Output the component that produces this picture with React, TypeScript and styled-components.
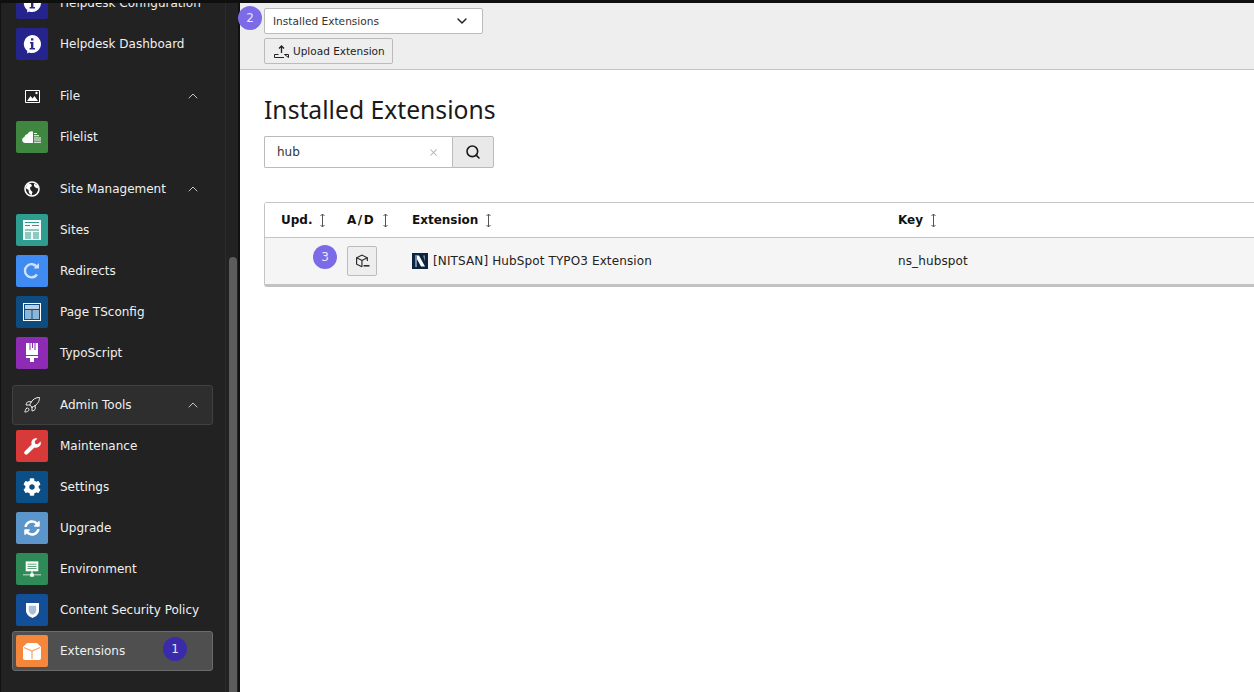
import React from 'react';
import styled, { createGlobalStyle } from 'styled-components';
import { ChevronDown, ChevronUp, Rocket, Search, X } from 'lucide-react';
import { FaCog, FaSyncAlt } from 'react-icons/fa';

const GlobalStyle = createGlobalStyle`
  html, body {
    margin: 0;
    height: 100%;
    overflow: hidden;
    background: #fff;
  }
  body {
    font-family: "DejaVu Sans", sans-serif;
    color: #1a1a1a;
  }
`;

const Page = styled.div`
  display: flex;
  flex-direction: column;
  width: 1254px;
  height: 692px;
  overflow: hidden;
`;

const TopStrip = styled.div`
  flex: none;
  height: 3px;
  background: #0f0f0f;
  position: relative;
  z-index: 2;
`;

const Body = styled.div`
  flex: 1;
  display: flex;
  min-height: 0;
`;

const Sider = styled.aside`
  flex: none;
  width: 240px;
  position: relative;
  overflow: hidden;
  background: #222222;
  border-left: 1px solid #111;
  border-right: 2px solid #111;
  box-sizing: border-box;
`;

const Scrollbar = styled.div`
  position: absolute;
  top: 254px;
  bottom: 0;
  right: 1px;
  width: 8px;
  border-radius: 4px 4px 0 0;
  background: #5c5c5c;
`;

const Track = styled.div`
  position: absolute;
  top: 0;
  bottom: 0;
  right: 12px;
  width: 1px;
  background: #2b2b2b;
`;

const Nav = styled.nav`
  display: flex;
  flex-direction: column;
  gap: 12px;
  margin-top: -20px;
  padding: 0 25px 0 11px;
`;

const Group = styled.div`
  display: flex;
  flex-direction: column;
  gap: 1px;
`;

const Row = styled.div<{ $active?: boolean; $boxed?: boolean }>`
  display: flex;
  align-items: center;
  position: relative;
  height: 40px;
  padding: 0 3px;
  box-sizing: border-box;
  border: 1px solid transparent;
  border-radius: 3px;
  color: #f0f0f0;
  font-size: 12px;
  ${(p) => p.$boxed && 'background: #2e2e2e; border-color: #414141;'}
  ${(p) => p.$active && 'background: #4f4f4f; border-color: #6c6c6c;'}
`;

const IconBox = styled.span<{ $bg: string }>`
  flex: none;
  display: flex;
  align-items: center;
  justify-content: center;
  width: 32px;
  height: 32px;
  border-radius: 2px;
  background: ${(p) => p.$bg};
  color: #fff;
`;

const PlainIcon = styled.span`
  flex: none;
  display: flex;
  align-items: center;
  justify-content: center;
  width: 32px;
  height: 32px;
  color: #f4f4f4;
`;

const Label = styled.span`
  margin-left: 12px;
  white-space: nowrap;
`;

const Caret = styled.span`
  margin-left: auto;
  margin-right: 8px;
  display: flex;
  color: #c4c4c4;
`;

const Badge = styled.span<{ $dark?: boolean; $x: number; $y: number }>`
  position: absolute;
  left: ${(p) => p.$x}px;
  top: ${(p) => p.$y}px;
  width: 24px;
  height: 24px;
  border-radius: 50%;
  display: flex;
  align-items: center;
  justify-content: center;
  font-size: 12px;
  color: #e8e6fb;
  background: ${(p) => (p.$dark ? '#3a2bab' : '#7b6be6')};
  z-index: 3;
`;

const Main = styled.main`
  flex: 1;
  min-width: 0;
  display: flex;
  flex-direction: column;
  position: relative;
`;

const Toolbar = styled.div`
  flex: none;
  display: flex;
  flex-direction: column;
  align-items: flex-start;
  gap: 4px;
  height: 67px;
  box-sizing: border-box;
  padding: 5px 24px 0;
  background: #eeeeee;
  border-bottom: 1px solid #c4c4c4;
`;

const Select = styled.div`
  width: 219px;
  height: 26px;
  box-sizing: border-box;
  display: flex;
  align-items: center;
  justify-content: space-between;
  padding: 0 12px 0 8px;
  background: #fff;
  border: 1px solid #bbbbbb;
  border-radius: 2px;
  font-size: 10.6px;
  color: #333;
`;

const Button = styled.button`
  display: inline-flex;
  align-items: center;
  gap: 4px;
  height: 26px;
  width: 129px;
  box-sizing: border-box;
  padding: 0 0 0 9px;
  font-family: inherit;
  font-size: 10.5px;
  white-space: nowrap;
  color: #222;
  background: #eeeeee;
  border: 1px solid #bbbbbb;
  border-radius: 2px;
`;

const Content = styled.div`
  flex: 1;
  padding: 24px 0 0 24px;
`;

const Title = styled.h1`
  margin: 0;
  font-family: "Noto Sans", sans-serif;
  font-weight: 400;
  font-size: 24.7px;
  line-height: 32px;
  color: #1a1a1a;
`;

const SearchBar = styled.div`
  display: flex;
  width: 230px;
  height: 32px;
  margin-top: 10px;
  box-sizing: border-box;
`;

const SearchInput = styled.div`
  flex: 1;
  display: flex;
  align-items: center;
  justify-content: space-between;
  padding: 0 13px 0 12px;
  border: 1px solid #bbbbbb;
  border-right: 0;
  border-radius: 2px 0 0 2px;
  background: #fff;
  font-size: 12px;
  color: #333;
`;

const SearchButton = styled.div`
  flex: none;
  width: 42px;
  box-sizing: border-box;
  display: flex;
  align-items: center;
  justify-content: center;
  background: #e9e9e9;
  border: 1px solid #bbbbbb;
  border-radius: 0 2px 2px 0;
  color: #1a1a1a;
`;

const Table = styled.div`
  margin: 34px -12px 0 0;
  border: 1px solid #c4c4c4;
  border-bottom: 3px solid #c2c2c2;
  border-radius: 3px;
`;

const Line = styled.div<{ $head?: boolean }>`
  display: grid;
  grid-template-columns: 66px 65px 486px 1fr;
  align-items: center;
  padding-left: 16px;
  box-sizing: border-box;
  font-size: 12px;
  ${(p) =>
    p.$head
      ? 'height: 35px; background: #fff; font-weight: 700; border-bottom: 1px solid #c4c4c4;'
      : 'height: 46px; background: #f5f5f5;'}
`;

const HeadCell = styled.div<{ $wide?: boolean }>`
  display: flex;
  align-items: center;
  gap: 7px;
  color: #111;
  ${(p) => p.$wide && 'letter-spacing: 1.5px;'}
`;

const ExtensionCell = styled.div`
  display: flex;
  align-items: center;
  gap: 5px;
  padding-bottom: 1px;
  letter-spacing: 0.12px;
  color: #222;
`;

const ActionButton = styled.div`
  width: 30px;
  height: 30px;
  box-sizing: border-box;
  display: flex;
  align-items: center;
  justify-content: center;
  background: #eeeeee;
  border: 1px solid #bcbcbc;
  border-radius: 2px;
`;

const SortIcon = () => (
  <svg width="7" height="15" viewBox="0 0 7 15" fill="none" stroke="#555" strokeWidth="1">
    <path d="M3.5 1v13M1.5 3l2-2 2 2M1.5 12l2 2 2-2" />
  </svg>
);

const icons: Record<string, React.ReactNode> = {
  info: (
    <svg width="20" height="20" viewBox="0 0 20 20">
      <path d="M10 1a9 9 0 1 1-3 17.500L5 19.500l.3-2.500A9 9 0 0 1 10 1z" fill="#fff" />
      <path d="M8 8h3.400v6H13v1.600H7.600V14H9V9.600H8zM9 4.200h2.400v2.400H9z" fill="#2a2a8c" />
    </svg>
  ),
  cloud: (
    <svg width="20" height="12" viewBox="0 0 20 12" fill="#fff">
      <path d="M3 12a3 3 0 0 1-.6-5.900A4 4 0 0 1 5.500 3 4.600 4.600 0 0 1 11 .4V12z" />
      <path d="M12 2h3v1h-3zM12 4.200h5v1h-5zM12 6.400h7v1h-7zM12 8.600h7v1h-7zM12 10.800h7v1h-7z" />
    </svg>
  ),
  sites: (
    <svg width="18" height="20" viewBox="0 0 18 20">
      <path d="M0 0h18v20H0z" fill="#fff" opacity=".95" />
      <path d="M2 2h14v1H2zM2 5h5v1H2zM9 5h7v1H9z" fill="#2e9c8e" />
      <path d="M2 9h14v2H2zM2 12h6v7H2zM10 12h6v7h-6z" fill="#8fcac2" />
    </svg>
  ),
  redirect: (
    <svg width="18" height="18" viewBox="0 0 18 18" fill="none">
      <path d="M14 12.500A6.600 6.600 0 1 1 14 5" stroke="#cfe1fb" strokeWidth="2.400" />
      <path d="M10.500 6.500H16V1z" fill="#cfe1fb" />
    </svg>
  ),
  tsconfig: (
    <svg width="18" height="18" viewBox="0 0 18 18">
      <path d="M0 0h18v18H0z" fill="#fff" />
      <path d="M1 1h16v16H1z" fill="#0e4c80" />
      <path d="M2 2h14v4H2z" fill="#b9d0e4" />
      <path d="M2 7h6.500v9H2zM9.500 7H16v9H9.500z" fill="#8db5d6" />
    </svg>
  ),
  brush: (
    <svg width="14" height="20" viewBox="0 0 14 20" fill="#fff">
      <path d="M1 0h12v12H1z" />
      <path d="M4.500 0h1v7h-1zM7 0h1v5H7zM9.500 0h1v7h-1z" fill="#8e2bb5" />
      <path d="M1 13h12v2H9v4H5v-4H1z" />
    </svg>
  ),
  wrench: (
    <svg width="17" height="17" viewBox="0 0 18 18" fill="#fff">
      <path d="M17.500 3.600l-3 3-2.600-.6-.6-2.600 3-3a5 5 0 0 0-6.200 6.400L.9 14a2 2 0 0 0 3 3l7.200-7a5 5 0 0 0 6.400-6.400z" />
    </svg>
  ),
  environment: (
    <svg width="18" height="17" viewBox="0 0 20 18" fill="#fff">
      <path d="M3 0h14v11H3z" />
      <path d="M5 2.500h10v1H5zM5 5h10v1H5zM5 7.500h10v1H5z" fill="#2e8b57" />
      <path d="M9.300 11h1.400v3h-1.400zM0 14.500h20v1H0zM8 13.500h4V17H8z" />
    </svg>
  ),
  shield: (
    <svg width="13" height="15" viewBox="0 0 14 16">
      <path d="M0 0h14v8c0 4-3 6.500-7 8-4-1.500-7-4-7-8z" fill="#fff" />
      <path d="M3 3h8v5c0 2-1.500 3.500-4 4.600C4.500 11.500 3 10 3 8z" fill="#a9bfdc" />
    </svg>
  ),
  cube: (
    <svg width="18" height="17" viewBox="0 0 18 17">
      <path d="M4 0h10l4 4v11a2 2 0 0 1-2 2H2a2 2 0 0 1-2-2V4z" fill="#fff" />
      <path d="M1 4.500l8 3.500 8-3.500M9 8v8" stroke="#f6a26a" strokeWidth="1.200" fill="none" />
    </svg>
  ),
};

const ImageIcon = () => (
  <svg width="15" height="13" viewBox="0 0 15 13">
    <path d="M0.500 0.500h14v12h-14z" fill="none" stroke="#fff" />
    <path d="M2 11l3.500-5 2 2.500L9.500 6l3.500 5z" fill="#fff" />
    <circle cx="11.500" cy="3" r="1.200" fill="#fff" />
  </svg>
);

const GlobeIcon = () => (
  <svg width="16" height="16" viewBox="0 0 16 16">
    <circle cx="8" cy="8" r="7" fill="none" stroke="#fff" strokeWidth="1.600" />
    <path d="M4 2.500l3 .5 1 2-2 1.500L6.500 9 8.500 11l-1 3.500L5 12l-.5-3L1.500 7zM10 2.500l3.500 2 1 3-2.500-.5L10 5z" fill="#fff" />
  </svg>
);

const UploadIcon = () => (
  <svg width="15" height="13" viewBox="0 0 15 13" fill="none" stroke="#222">
    <path d="M7.500 8V1M5 3.500L7.500 1 10 3.500" strokeWidth="1.300" />
    <path d="M0.500 12.500V9.500H4.500M10.500 9.500h4v3zM0.500 12.500H10" />
  </svg>
);

const UninstallIcon = () => (
  <svg width="15" height="15" viewBox="0 0 14 14" fill="none" stroke="#222" strokeWidth="1.050">
    <path d="M11.500 6.500V3.500L6.500 1 1.500 3.500v6L6.500 12" />
    <path d="M1.500 3.500l5 2.500 5-2.500M6.500 6v6" />
    <path d="M8 11h5.500" strokeWidth="1.400" />
  </svg>
);

const ExtLogo = () => (
  <svg width="16" height="16" viewBox="0 0 16 16">
    <path d="M0 0h16v16H0z" fill="#0b2440" />
    <path d="M3 2.500h4l6 11H9z" fill="#fff" />
    <path d="M3 2.500h2V14H3zM11 2.500h2v6z" fill="#6f8aa6" />
  </svg>
);

type Item = { label: string; bg: string; icon: React.ReactNode };

const helpdesk: Item[] = [
  { label: 'Helpdesk Configuration', bg: '#25248c', icon: icons.info },
  { label: 'Helpdesk Dashboard', bg: '#25248c', icon: icons.info },
];
const file: Item[] = [{ label: 'Filelist', bg: '#3f8740', icon: icons.cloud }];
const site: Item[] = [
  { label: 'Sites', bg: '#2e9c8e', icon: icons.sites },
  { label: 'Redirects', bg: '#3f8bf2', icon: icons.redirect },
  { label: 'Page TSconfig', bg: '#0e4c80', icon: icons.tsconfig },
  { label: 'TypoScript', bg: '#8e2bb5', icon: icons.brush },
];
const admin: Item[] = [
  { label: 'Maintenance', bg: '#d83a3a', icon: icons.wrench },
  { label: 'Settings', bg: '#0c4f86', icon: <FaCog size={18} /> },
  { label: 'Upgrade', bg: '#5b95c9', icon: <FaSyncAlt size={16} /> },
  { label: 'Environment', bg: '#2e8b57', icon: icons.environment },
  { label: 'Content Security Policy', bg: '#134f96', icon: icons.shield },
];

const NavItems = ({ items }: { items: Item[] }) => (
  <>
    {items.map((item) => (
      <Row key={item.label}>
        <IconBox $bg={item.bg}>{item.icon}</IconBox>
        <Label>{item.label}</Label>
      </Row>
    ))}
  </>
);

const NavHeader = ({ label, icon, boxed }: { label: string; icon: React.ReactNode; boxed?: boolean }) => (
  <Row $boxed={boxed}>
    <PlainIcon>{icon}</PlainIcon>
    <Label>{label}</Label>
    <Caret>
      <ChevronUp size={16} strokeWidth={1.5} />
    </Caret>
  </Row>
);

export default function App() {
  return (
    <Page>
      <GlobalStyle />
      <TopStrip />
      <Body>
        <Sider>
          <Nav>
            <Group>
              <NavItems items={helpdesk} />
            </Group>
            <Group>
              <NavHeader label="File" icon={<ImageIcon />} />
              <NavItems items={file} />
            </Group>
            <Group>
              <NavHeader label="Site Management" icon={<GlobeIcon />} />
              <NavItems items={site} />
            </Group>
            <Group>
              <NavHeader label="Admin Tools" icon={<Rocket size={18} strokeWidth={1.3} />} boxed />
              <NavItems items={admin} />
              <Row $active>
                <IconBox $bg="#f5873c">{icons.cube}</IconBox>
                <Label>Extensions</Label>
                <Badge $dark $x={150} $y={5}>1</Badge>
              </Row>
            </Group>
          </Nav>
          <Track />
          <Scrollbar />
        </Sider>
        <Main>
          <Badge $x={-2} $y={3}>2</Badge>
          <Toolbar>
            <Select>
              Installed Extensions
              <ChevronDown size={16} strokeWidth={2.2} color="#222" />
            </Select>
            <Button>
              <UploadIcon />
              Upload Extension
            </Button>
          </Toolbar>
          <Content>
            <Title>Installed Extensions</Title>
            <SearchBar>
              <SearchInput>
                hub
                <X size={11} strokeWidth={2.2} color="#b0b0b0" />
              </SearchInput>
              <SearchButton>
                <Search size={16} strokeWidth={2.4} />
              </SearchButton>
            </SearchBar>
            <Table>
              <Line $head>
                <HeadCell>Upd. <SortIcon /></HeadCell>
                <HeadCell $wide>A/D <SortIcon /></HeadCell>
                <HeadCell>Extension <SortIcon /></HeadCell>
                <HeadCell>Key <SortIcon /></HeadCell>
              </Line>
              <Line>
                <div />
                <ActionButton><UninstallIcon /></ActionButton>
                <ExtensionCell><ExtLogo />[NITSAN] HubSpot TYPO3 Extension</ExtensionCell>
                <ExtensionCell>ns_hubspot</ExtensionCell>
              </Line>
            </Table>
          </Content>
          <Badge $x={73} $y={242}>3</Badge>
        </Main>
      </Body>
    </Page>
  );
}
